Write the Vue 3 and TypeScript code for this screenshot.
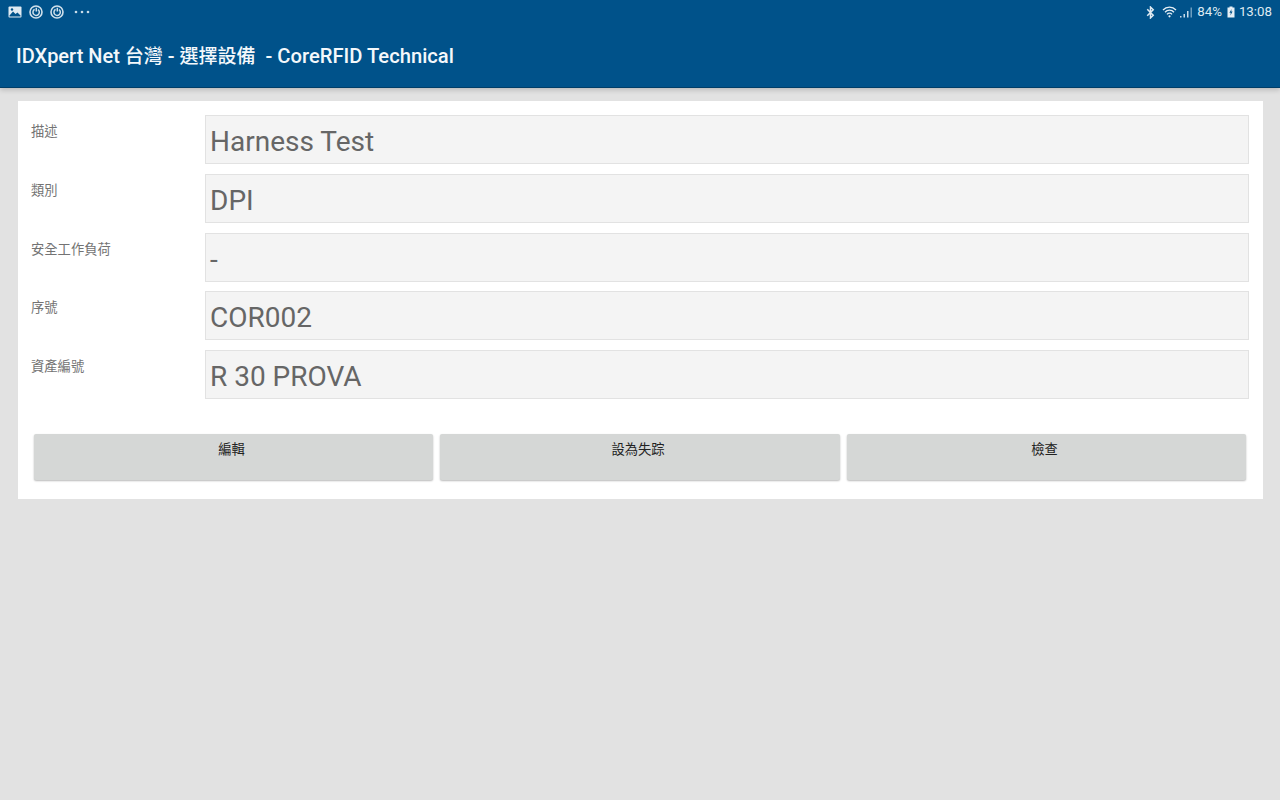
<script setup lang="ts">
interface Field { label: string; value: string }
const fields: Field[] = [
  { label: '描述', value: 'Harness Test' },
  { label: '類別', value: 'DPI' },
  { label: '安全工作負荷', value: '-' },
  { label: '序號', value: 'COR002' },
  { label: '資產編號', value: 'R 30 PROVA' },
]
const actions: string[] = ['編輯', '設為失踪', '檢查']
</script>

<template>
  <div class="screen">
    <header class="appbar">
      <div class="status">
        <div class="status-left">
          <svg class="ic" width="14" height="12" viewBox="0 0 14 12">
            <rect x="0.5" y="0.5" width="13" height="11" rx="1" fill="#dfeaf2" />
            <path d="M1.5 9.5 L5 5.5 L7.5 8 L9.5 6.5 L12.5 9.5 V10.5 H1.5 Z" fill="#00528a" />
            <circle cx="4" cy="3.5" r="1.2" fill="#00528a" />
          </svg>
          <svg class="ic" width="14" height="14" viewBox="0 0 14 14" fill="none" stroke="#d0e0eb">
            <circle cx="7" cy="7" r="6" stroke-width="1.6" />
            <path d="M7.3 2.8 V6.6 M5.6 4.4 A3.2 3.2 0 1 0 9 4.6" stroke-width="1.5" />
          </svg>
          <svg class="ic" width="14" height="14" viewBox="0 0 14 14" fill="none" stroke="#d0e0eb">
            <circle cx="7" cy="7" r="6" stroke-width="1.6" />
            <path d="M7.3 2.8 V6.6 M5.6 4.4 A3.2 3.2 0 1 0 9 4.6" stroke-width="1.5" />
          </svg>
          <svg class="dots" width="16" height="4" viewBox="0 0 16 4" fill="#c9dce9">
            <circle cx="2" cy="2" r="1.3" /><circle cx="8" cy="2" r="1.3" /><circle cx="14" cy="2" r="1.3" />
          </svg>
        </div>
        <div class="status-right">
          <svg class="bt" width="9" height="13" viewBox="0 0 8 12" fill="none" stroke="#dfeaf2" stroke-width="1.4">
            <path d="M1 3 L6.5 8.5 L4 11 V1 L6.5 3.5 L1 9" />
          </svg>
          <svg class="wifi" width="15" height="12" viewBox="0 0 15 12" fill="none" stroke="#e6eff5" stroke-width="1.3">
            <path d="M1 4 A9 9 0 0 1 14 4 M3 6.2 A6 6 0 0 1 12 6.2 M5 8.3 A3.2 3.2 0 0 1 10 8.3" />
            <circle cx="7.5" cy="10.3" r="1.1" fill="#e6eff5" stroke="none" />
          </svg>
          <svg class="signal" width="12" height="11" viewBox="0 0 12 11" fill="#c9dce9">
            <rect x="0" y="9" width="1.5" height="1.5" />
            <rect x="3.5" y="7" width="1.5" height="3.5" />
            <rect x="7" y="4" width="1.5" height="6.5" />
            <rect x="10.5" y="0.5" width="1.5" height="10" opacity="0.55" />
          </svg>
          <span class="batt-text">84%</span>
          <svg class="batt" width="8" height="12" viewBox="0 0 8 12">
            <path d="M2.5 0.5 H5.5 V1.5 H7.5 V11.5 H0.5 V1.5 H2.5 Z" fill="#e6eff5" />
            <path d="M4.6 3 L2.4 6.8 H3.8 L3.4 9.6 L5.6 5.6 H4.2 Z" fill="#00528a" />
          </svg>
          <span class="clock">13:08</span>
        </div>
      </div>
      <h1 class="title">IDXpert Net <span class="cjk">台灣</span> - <span class="cjk">選擇設備</span>&nbsp; - <span class="latin">CoreRFID Technical</span></h1>
    </header>

    <main class="content">
      <section class="card">
        <div class="rows">
          <div v-for="f in fields" :key="f.label" class="row">
            <div class="label">{{ f.label }}</div>
            <div class="value">{{ f.value }}</div>
          </div>
        </div>
        <div class="actions">
          <button v-for="a in actions" :key="a" class="btn" type="button">{{ a }}</button>
        </div>
      </section>
    </main>
  </div>
</template>

<style>
html, body { margin: 0; background: #e2e2e2; }
</style>

<style scoped>
.screen {
  width: 1280px;
  height: 800px;
  overflow: hidden;
  background: #e2e2e2;
  display: flex;
  flex-direction: column;
  font-family: Roboto, "Noto Sans CJK TC", sans-serif;
}
.appbar {
  height: 88px;
  flex: none;
  background: #00528a;
  border-bottom: 1px solid #003e68;
  box-sizing: border-box;
  box-shadow: 0 2px 5px rgba(0, 0, 0, 0.18);
  display: flex;
  flex-direction: column;
}
.status {
  height: 24px;
  flex: none;
  display: flex;
  justify-content: space-between;
  align-items: center;
  padding: 0 8px;
}
.status-left { display: flex; align-items: center; gap: 7px; }
.ic { display: block; }
.dots { margin-left: 3px; display: block; }
.status-right {
  display: flex;
  align-items: center;
  color: #dfeaf2;
  font-size: 13.3px;
  line-height: 16px;
}
.wifi { margin-left: 7px; }
.signal { margin-left: 3px; }
.batt-text { margin-left: 5px; }
.batt { margin-left: 5px; }
.clock { margin-left: 4px; }
.title {
  margin: 16px 0 0 16px;
  font-size: 20px;
  line-height: 32px;
  font-weight: 500;
  color: #f4f8fb;
  white-space: nowrap;
}
.cjk { font-size: 19px; }
.latin { font-size: 20.2px; }
.content { flex: 1; padding: 13px 17.5px 0 17.5px; }
.card {
  background: #fff;
  height: 397.5px;
  box-sizing: border-box;
  padding: 14px 13.5px 0 13.5px;
}
.rows { display: flex; flex-direction: column; gap: 9.75px; }
.row {
  display: grid;
  grid-template-columns: 174px 1fr;
  grid-template-rows: 49px;
  height: 49px;
}
.label {
  font-size: 13.3px;
  line-height: 18px;
  padding-top: 8px;
  color: #737373;
}
.value {
  height: 49px;
  background: #f4f4f4;
  border: 1px solid #e2e2e2;
  box-sizing: border-box;
  padding: 0 4px;
  font-size: 28px;
  line-height: 51px;
  color: #666;
  white-space: nowrap;
}
.actions {
  display: flex;
  gap: 7.4px;
  margin-top: 35px;
  padding: 0 3px;
}
.btn {
  flex: 1;
  height: 46px;
  border: 0;
  border-radius: 2px;
  background: #d5d7d6;
  box-shadow: 0 1px 2px rgba(0, 0, 0, 0.28);
  padding: 7px 4px 0 0;
  display: flex;
  justify-content: center;
  align-items: flex-start;
  font-family: inherit;
  font-size: 13.3px;
  line-height: 18px;
  color: #222;
}
</style>
